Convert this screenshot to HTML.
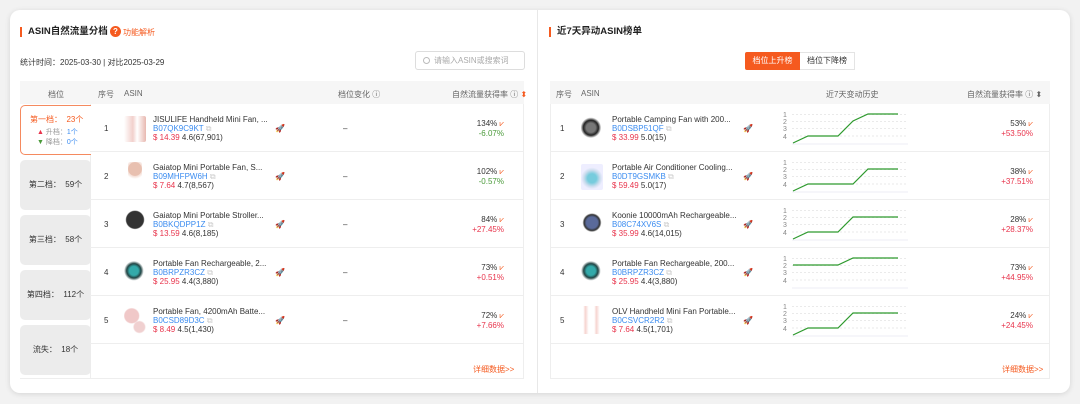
<!DOCTYPE html><html><head><meta charset="utf-8"><style>
*{box-sizing:border-box;margin:0;padding:0}
body{width:1080px;height:404px;background:#f2f2f2;font-family:"Liberation Sans","Noto Sans CJK SC",sans-serif;font-size:8px;color:#333;position:relative;overflow:hidden}
.card{position:absolute;left:10px;top:10px;width:1060px;height:383px;background:#fff;border-radius:10px;box-shadow:0 1px 6px rgba(0,0,0,.12)}
.a{position:absolute}
.ttl{font-size:9.5px;font-weight:bold;color:#222;padding-left:6px;border-left:2px solid #f55a1f;line-height:10px;white-space:nowrap}
.hdr{background:#f6f6f6;color:#666;height:23px}
.row{border-bottom:1px solid #eee;height:48px}
.name{font-size:8px;color:#333;white-space:nowrap}
.asin{color:#3b8cf0}
.price{color:#e8334b}
.tier{background:#ececec;border-radius:5px;color:#333;font-size:8px;text-align:center}
.pct{text-align:right;font-size:8px;line-height:10px}
.img{border-radius:2px}
</style></head><body><div class="card"></div>
<div class="a" style="left:537px;top:10px;width:1px;height:383px;background:#e8e8e8"></div>

<!-- LEFT -->
<div class="a ttl" style="left:20px;top:27px">ASIN自然流量分档</div>
<div class="a" style="left:110px;top:26px;width:11px;height:11px;border-radius:50%;background:#f55a1f;color:#fff;font-size:8px;text-align:center;line-height:11px;font-weight:bold">?</div>
<div class="a" style="left:123px;top:27px;color:#f55a1f;font-size:8px">功能解析</div>
<div class="a" style="left:20px;top:57px;font-size:8px;color:#333">统计时间：2025-03-30 | 对比2025-03-29</div>
<div class="a" style="left:415px;top:51px;width:110px;height:19px;border:1px solid #ddd;border-radius:3px;color:#aaa;font-size:8px;line-height:17px;padding-left:18px">请输入ASIN或搜索词</div>
<div class="a" style="left:423px;top:57px;width:7px;height:7px;border:1px solid #bbb;border-radius:50%"></div>

<div class="a hdr" style="left:20px;top:81px;width:504px"></div>
<div class="a" style="left:48px;top:89px;color:#666">档位</div>
<div class="a" style="left:98px;top:89px;color:#666">序号</div>
<div class="a" style="left:124px;top:89px;color:#666">ASIN</div>
<div class="a" style="left:338px;top:89px;color:#666">档位变化 ⓘ</div>
<div class="a" style="left:452px;top:89px;color:#666">自然流量获得率 ⓘ <span style="color:#f55a1f">⬍</span></div>

<div class="a" style="left:90px;top:104px;width:434px;height:275px;border:1px solid #eee;border-top:none"></div>
<div class="a" style="left:20px;top:105px;width:71px;height:50px;border:1px solid #f58a5f;border-right:none;border-radius:5px 0 0 5px;background:#fff"></div>
<div class="a" style="left:30px;top:114px;color:#f55a1f;font-size:8px">第一档：&nbsp;&nbsp;23个</div>
<div class="a" style="left:37px;top:127px;color:#999;font-size:7px"><span style="color:#e8334b">▲</span> 升档：<span class="asin">1个</span></div>
<div class="a" style="left:37px;top:137px;color:#999;font-size:7px"><span style="color:#4a9a3a">▼</span> 降档：<span class="asin">0个</span></div>
<div class="a tier" style="left:20px;top:160px;width:71px;height:50px;line-height:50px">第二档：&nbsp;&nbsp;59个</div>
<div class="a tier" style="left:20px;top:215px;width:71px;height:50px;line-height:50px">第三档：&nbsp;&nbsp;58个</div>
<div class="a tier" style="left:20px;top:270px;width:71px;height:50px;line-height:50px">第四档：&nbsp;&nbsp;112个</div>
<div class="a tier" style="left:20px;top:325px;width:71px;height:50px;line-height:50px">流失：&nbsp;&nbsp;18个</div>
<div class="a" style="left:20px;top:378px;width:504px;height:1px;background:#eee"></div>

<!-- left rows -->
<div class="a" style="left:90px;top:104px;width:434px">
 <div class="row" style="position:relative">
  <div class="a" style="left:14px;top:20px">1</div>
  <div class="a img" style="left:34px;top:12px;width:22px;height:26px;background:linear-gradient(90deg,#fff,#f2d0cc 40%,#fff 60%,#e8b8b0)"></div>
  <div class="a name" style="left:63px;top:11px">JISULIFE Handheld Mini Fan, ...</div>
  <div class="a asin" style="left:63px;top:20px">B07QK9C9KT <span style="color:#ccc">⧉</span></div>
  <div class="a" style="left:63px;top:29px"><span class="price">$ 14.39</span> 4.6(67,901)</div>
  <div class="a" style="left:185px;top:20px;color:#e8b040">🚀</div>
  <div class="a" style="left:253px;top:20px">–</div>
  <div class="a pct" style="right:20px;top:15px">134% <span style="color:#f55a1f">⩗</span><br><span style="color:#4a9a3a">-6.07%</span></div>
 </div>
 <div class="row" style="position:relative">
  <div class="a" style="left:14px;top:20px">2</div>
  <div class="a img" style="left:38px;top:10px;width:14px;height:28px;background:radial-gradient(circle at 50% 25%,#e8c0b0 30%,#f4ddd4 32%,#fff 45%),linear-gradient(90deg,#fff 40%,#f0c8bc 45%,#f0c8bc 55%,#fff 60%)"></div>
  <div class="a name" style="left:63px;top:11px">Gaiatop Mini Portable Fan, S...</div>
  <div class="a asin" style="left:63px;top:20px">B09MHFPW6H <span style="color:#ccc">⧉</span></div>
  <div class="a" style="left:63px;top:29px"><span class="price">$ 7.64</span> 4.7(8,567)</div>
  <div class="a" style="left:185px;top:20px;color:#e8b040">🚀</div>
  <div class="a" style="left:253px;top:20px">–</div>
  <div class="a pct" style="right:20px;top:15px">102% <span style="color:#f55a1f">⩗</span><br><span style="color:#4a9a3a">-0.57%</span></div>
 </div>
 <div class="row" style="position:relative">
  <div class="a" style="left:14px;top:20px">3</div>
  <div class="a img" style="left:34px;top:10px;width:22px;height:28px;background:radial-gradient(circle at 50% 35%,#333 40%,transparent 45%)"></div>
  <div class="a name" style="left:63px;top:11px">Gaiatop Mini Portable Stroller...</div>
  <div class="a asin" style="left:63px;top:20px">B0BKQDPP1Z <span style="color:#ccc">⧉</span></div>
  <div class="a" style="left:63px;top:29px"><span class="price">$ 13.59</span> 4.6(8,185)</div>
  <div class="a" style="left:185px;top:20px;color:#e8b040">🚀</div>
  <div class="a" style="left:253px;top:20px">–</div>
  <div class="a pct" style="right:20px;top:15px">84% <span style="color:#f55a1f">⩗</span><br><span style="color:#e8334b">+27.45%</span></div>
 </div>
 <div class="row" style="position:relative">
  <div class="a" style="left:14px;top:20px">4</div>
  <div class="a img" style="left:34px;top:12px;width:22px;height:24px;background:radial-gradient(circle at 45% 45%,#3aa 25%,#244 40%,transparent 55%)"></div>
  <div class="a name" style="left:63px;top:11px">Portable Fan Rechargeable, 2...</div>
  <div class="a asin" style="left:63px;top:20px">B0BRPZR3CZ <span style="color:#ccc">⧉</span></div>
  <div class="a" style="left:63px;top:29px"><span class="price">$ 25.95</span> 4.4(3,880)</div>
  <div class="a" style="left:185px;top:20px;color:#e8b040">🚀</div>
  <div class="a" style="left:253px;top:20px">–</div>
  <div class="a pct" style="right:20px;top:15px">73% <span style="color:#f55a1f">⩗</span><br><span style="color:#e8334b">+0.51%</span></div>
 </div>
 <div class="row" style="position:relative">
  <div class="a" style="left:14px;top:20px">5</div>
  <div class="a img" style="left:34px;top:10px;width:22px;height:28px;background:radial-gradient(circle at 35% 35%,#f0c8c8 30%,transparent 35%),radial-gradient(circle at 70% 75%,#f0d0d0 20%,transparent 25%)"></div>
  <div class="a name" style="left:63px;top:11px">Portable Fan, 4200mAh Batte...</div>
  <div class="a asin" style="left:63px;top:20px">B0CSD89D3C <span style="color:#ccc">⧉</span></div>
  <div class="a" style="left:63px;top:29px"><span class="price">$ 8.49</span> 4.5(1,430)</div>
  <div class="a" style="left:185px;top:20px;color:#e8b040">🚀</div>
  <div class="a" style="left:253px;top:20px">–</div>
  <div class="a pct" style="right:20px;top:15px">72% <span style="color:#f55a1f">⩗</span><br><span style="color:#e8334b">+7.66%</span></div>
 </div>
</div>
<div class="a" style="left:473px;top:364px;color:#f55a1f">详细数据&gt;&gt;</div>

<!-- RIGHT -->
<div class="a ttl" style="left:549px;top:27px">近7天异动ASIN榜单</div>
<div class="a" style="left:745px;top:52px;width:55px;height:18px;background:#f55a1f;color:#fff;text-align:center;line-height:18px;border-radius:2px 0 0 2px">档位上升榜</div>
<div class="a" style="left:800px;top:52px;width:55px;height:18px;border:1px solid #e4e4e4;border-left:none;text-align:center;line-height:16px;color:#333">档位下降榜</div>
<div class="a hdr" style="left:550px;top:81px;width:500px"></div>
<div class="a" style="left:556px;top:89px;color:#666">序号</div>
<div class="a" style="left:581px;top:89px;color:#666">ASIN</div>
<div class="a" style="left:826px;top:89px;color:#666">近7天变动历史</div>
<div class="a" style="left:967px;top:89px;color:#666">自然流量获得率 ⓘ ⬍</div>
<div class="a" style="left:550px;top:104px;width:500px;height:275px;border:1px solid #eee;border-top:none"></div>

<div class="a" style="left:550px;top:104px;width:500px">
 <div class="row" style="position:relative">
  <div class="a" style="left:10px;top:20px">1</div>
  <div class="a img" style="left:31px;top:12px;width:22px;height:26px;background:radial-gradient(circle at 45% 45%,#777 25%,#222 40%,transparent 55%)"></div>
  <div class="a name" style="left:62px;top:11px">Portable Camping Fan with 200...</div>
  <div class="a asin" style="left:62px;top:20px">B0DSBP51QF <span style="color:#ccc">⧉</span></div>
  <div class="a" style="left:62px;top:29px"><span class="price">$ 33.99</span> 5.0(15)</div>
  <div class="a" style="left:193px;top:20px;color:#e8b040">🚀</div>
  <div class="a pct" style="right:17px;top:15px">53% <span style="color:#f55a1f">⩗</span><br><span style="color:#e8334b">+53.50%</span></div>
 </div>
 <div class="row" style="position:relative">
  <div class="a" style="left:10px;top:20px">2</div>
  <div class="a img" style="left:31px;top:12px;width:22px;height:26px;background:radial-gradient(circle at 50% 55%,#7cd 25%,#cde 45%,#eef 60%)"></div>
  <div class="a name" style="left:62px;top:11px">Portable Air Conditioner Cooling...</div>
  <div class="a asin" style="left:62px;top:20px">B0DT9GSMKB <span style="color:#ccc">⧉</span></div>
  <div class="a" style="left:62px;top:29px"><span class="price">$ 59.49</span> 5.0(17)</div>
  <div class="a" style="left:193px;top:20px;color:#e8b040">🚀</div>
  <div class="a pct" style="right:17px;top:15px">38% <span style="color:#f55a1f">⩗</span><br><span style="color:#e8334b">+37.51%</span></div>
 </div>
 <div class="row" style="position:relative">
  <div class="a" style="left:10px;top:20px">3</div>
  <div class="a img" style="left:31px;top:10px;width:22px;height:28px;background:radial-gradient(circle at 50% 45%,#5a6a9a 30%,#333 42%,transparent 50%)"></div>
  <div class="a name" style="left:62px;top:11px">Koonie 10000mAh Rechargeable...</div>
  <div class="a asin" style="left:62px;top:20px">B08C74XV6S <span style="color:#ccc">⧉</span></div>
  <div class="a" style="left:62px;top:29px"><span class="price">$ 35.99</span> 4.6(14,015)</div>
  <div class="a" style="left:193px;top:20px;color:#e8b040">🚀</div>
  <div class="a pct" style="right:17px;top:15px">28% <span style="color:#f55a1f">⩗</span><br><span style="color:#e8334b">+28.37%</span></div>
 </div>
 <div class="row" style="position:relative">
  <div class="a" style="left:10px;top:20px">4</div>
  <div class="a img" style="left:31px;top:12px;width:22px;height:24px;background:radial-gradient(circle at 45% 45%,#3aa 25%,#244 40%,transparent 55%)"></div>
  <div class="a name" style="left:62px;top:11px">Portable Fan Rechargeable, 200...</div>
  <div class="a asin" style="left:62px;top:20px">B0BRPZR3CZ <span style="color:#ccc">⧉</span></div>
  <div class="a" style="left:62px;top:29px"><span class="price">$ 25.95</span> 4.4(3,880)</div>
  <div class="a" style="left:193px;top:20px;color:#e8b040">🚀</div>
  <div class="a pct" style="right:17px;top:15px">73% <span style="color:#f55a1f">⩗</span><br><span style="color:#e8334b">+44.95%</span></div>
 </div>
 <div class="row" style="position:relative">
  <div class="a" style="left:10px;top:20px">5</div>
  <div class="a img" style="left:31px;top:10px;width:22px;height:28px;background:linear-gradient(90deg,#fff 10%,#f6d4d0 20%,#fff 35%,#fff 60%,#f6d4d0 70%,#fff 85%)"></div>
  <div class="a name" style="left:62px;top:11px">OLV Handheld Mini Fan Portable...</div>
  <div class="a asin" style="left:62px;top:20px">B0CSVCR2R2 <span style="color:#ccc">⧉</span></div>
  <div class="a" style="left:62px;top:29px"><span class="price">$ 7.64</span> 4.5(1,701)</div>
  <div class="a" style="left:193px;top:20px;color:#e8b040">🚀</div>
  <div class="a pct" style="right:17px;top:15px">24% <span style="color:#f55a1f">⩗</span><br><span style="color:#e8334b">+24.45%</span></div>
 </div>
</div>
<div class="a" style="left:1002px;top:364px;color:#f55a1f">详细数据&gt;&gt;</div>

<!-- sparklines -->
<svg class="a" style="left:780px;top:104px" width="130" height="250" font-family="Liberation Sans" font-size="7" fill="#888">
<defs><g id="grid"><text x="3" y="7">1</text><text x="3" y="14">2</text><text x="3" y="21">3</text><text x="3" y="29">4</text>
<path d="M12 4.5H128M12 11.5H128M12 18.5H128M12 26H128" stroke="#e3e3e3" stroke-dasharray="2 2" stroke-width=".7"/><path d="M12 34H128" stroke="#e6e6f0" stroke-width=".8"/></g></defs>
<g transform="translate(0,6)"><use href="#grid"/><polyline points="13,33 28,26 43,26 58,26 73,11 88,4 103,4 118,4" fill="none" stroke="#2e9a2e" stroke-width="1.2"/></g>
<g transform="translate(0,54)"><use href="#grid"/><polyline points="13,33 28,26 43,26 58,26 73,26 88,11 103,11 118,11" fill="none" stroke="#2e9a2e" stroke-width="1.2"/></g>
<g transform="translate(0,102)"><use href="#grid"/><polyline points="13,33 28,26 43,26 58,26 73,11 88,11 103,11 118,11" fill="none" stroke="#2e9a2e" stroke-width="1.2"/></g>
<g transform="translate(0,150)"><use href="#grid"/><polyline points="13,11 28,11 43,11 58,11 73,4 88,4 103,4 118,4" fill="none" stroke="#2e9a2e" stroke-width="1.2"/></g>
<g transform="translate(0,198)"><use href="#grid"/><polyline points="13,33 28,26 43,26 58,26 73,11 88,11 103,11 118,11" fill="none" stroke="#2e9a2e" stroke-width="1.2"/></g>
</svg>
</body></html>
